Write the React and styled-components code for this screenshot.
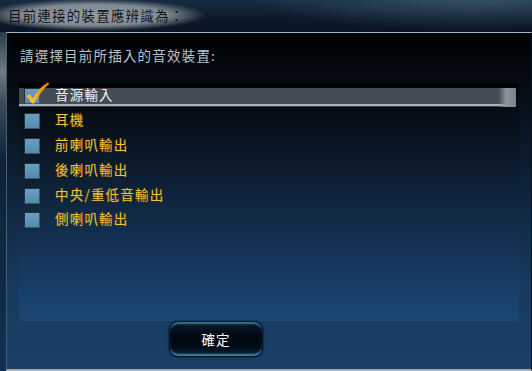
import React from "react";
import styled, { createGlobalStyle } from "styled-components";

const GlobalStyle = createGlobalStyle`
  html, body {
    margin: 0;
    padding: 0;
    background: #0b1626;
  }
  * {
    box-sizing: border-box;
  }
`;

const devices = [
  { id: "line-in", name: "音源輸入", checked: true },
  { id: "headphone", name: "耳機" },
  { id: "front", name: "前喇叭輸出" },
  { id: "rear", name: "後喇叭輸出" },
  { id: "center", name: "中央/重低音輸出" },
  { id: "side", name: "側喇叭輸出" },
];

const CheckMark = () => (
  <svg width="24" height="24" viewBox="0 0 24 24">
    <defs>
      <linearGradient id="chk" x1="0" y1="1" x2="1" y2="0">
        <stop offset="0" stopColor="#f7d23a" />
        <stop offset="0.5" stopColor="#f0a418" />
        <stop offset="1" stopColor="#d9780c" />
      </linearGradient>
    </defs>
    <path
      d="M0.5 14 L3.8 12 L6.8 16.5 Q12 6.5 22 0.3 L23.3 1.8 Q14.5 9.5 8.2 21.5 L6 21.5 Z"
      fill="url(#chk)"
    />
  </svg>
);

const App = () => {
  return (
    <>
      <GlobalStyle />
      <Window>
        <TitleBar>
          <TitleText>目前連接的裝置應辨識為：</TitleText>
        </TitleBar>
        <Body>
          <SideStrip />
          <Panel>
            <Prompt>請選擇目前所插入的音效裝置:</Prompt>
            <ListBox>
              {devices.map((d) => (
                <Row key={d.id} $selected={d.checked}>
                  <Box>
                    {d.checked && (
                      <Tick>
                        <CheckMark />
                      </Tick>
                    )}
                  </Box>
                  <Label $selected={d.checked}>{d.name}</Label>
                </Row>
              ))}
            </ListBox>
            <Footer>
              <OkButton>確定</OkButton>
            </Footer>
          </Panel>
        </Body>
      </Window>
    </>
  );
};

const Window = styled.div`
  width: 532px;
  height: 371px;
  display: flex;
  flex-direction: column;
  overflow: hidden;
  font-family: "Noto Sans CJK TC", "Noto Sans", sans-serif;
  background: #0b1626;
`;

const TitleBar = styled.div`
  height: 32px;
  flex: none;
  display: flex;
  align-items: center;
  background:
    radial-gradient(ellipse 220px 30px at 470px 0px, rgba(64, 94, 110, 0.7), rgba(64, 94, 110, 0) 100%),
    linear-gradient(to bottom, #172c42 0%, #0d1a2a 55%, #0a1424 100%);
`;

const TitleText = styled.div`
  height: 32px;
  display: flex;
  align-items: center;
  padding: 0 24px 3px 8px;
  font-size: 13.5px;
  letter-spacing: 1.2px;
  color: #111417;
  background: radial-gradient(
    ellipse 112px 16px at 94px 15px,
    #939ca3 0%,
    #7f8991 65%,
    rgba(110, 120, 130, 0) 100%
  );
`;

const Body = styled.div`
  flex: 1;
  display: flex;
  min-height: 0;
`;

const SideStrip = styled.div`
  width: 6px;
  flex: none;
  background: linear-gradient(
    to bottom,
    #2a3c4c 0px,
    #6f7c88 40px,
    #3a4c5c 70px,
    #0d2238 130px,
    #12304e 339px
  );
`;

const Panel = styled.div`
  flex: 1;
  display: flex;
  flex-direction: column;
  border-top: 1px solid #9ab4c8;
  border-left: 1px solid #4a5e70;
  border-right: 1px solid #07121e;
  border-bottom: 2px solid #a2adb6;
  background: linear-gradient(
    to bottom,
    #000204 0%,
    #050b12 15%,
    #0d2238 45%,
    #17395e 75%,
    #1a4068 100%
  );
`;

const Prompt = styled.div`
  height: 50px;
  padding: 12px 0 0 13px;
  font-size: 13.5px;
  letter-spacing: 1.2px;
  color: #bcc3ca;
`;

const ListBox = styled.div`
  width: 500px;
  height: 238px;
  margin-left: 12px;
  flex: none;
  border-top: 4px solid #000000;
  background: linear-gradient(
    to bottom,
    #03070c 0%,
    #08121d 20%,
    #112a46 55%,
    #1b4775 100%
  );
`;

const Row = styled.div`
  position: relative;
  height: 24.9px;
  display: flex;
  align-items: flex-start;
  padding: 0 0 0 5px;
  &::before {
    content: "";
    display: ${(p) => (p.$selected ? "block" : "none")};
    position: absolute;
    left: 0;
    right: 3px;
    top: 1px;
    height: 19px;
    background:
      linear-gradient(to right, rgba(160, 168, 176, 0) 96.5%, #8c949c 98%, #7a828a 100%),
      linear-gradient(to bottom, #434c55 0px, #434c55 16px, #aab2ba 16px, #aab2ba 18px, #3a4048 18px);
  }
`;

const Box = styled.div`
  position: relative;
  width: 16px;
  height: 16px;
  margin-top: 1px;
  flex: none;
  border: 1px solid #24313d;
  border-right-color: #3b5668;
  border-bottom-color: #3b5668;
  background: linear-gradient(to bottom, #6a9ec0, #558cae);
`;

const Tick = styled.div`
  position: absolute;
  left: 1px;
  top: -7px;
  line-height: 0;
`;

const Label = styled.span`
  position: relative;
  margin-left: 15px;
  margin-top: -1px;
  font-size: 13.5px;
  line-height: 16px;
  letter-spacing: 1.2px;
  color: ${(p) => (p.$selected ? "#f2f2f2" : "#f0c232")};
  text-shadow: ${(p) => (p.$selected ? "none" : "0 0 2px rgba(120, 90, 0, 0.6)")};
`;

const Footer = styled.div`
  padding-left: 162px;
`;

const OkButton = styled.button`
  width: 94px;
  height: 36px;
  border-radius: 9px;
  border: 1px solid #06121c;
  background: linear-gradient(to bottom, #061a2c 0%, #020a14 40%, #020a14 70%, #06223a 100%);
  box-shadow:
    inset 0 3px 2px -1px #2f7f96,
    inset 0 -3px 2px -1px #2c92b8,
    0 0 2px rgba(0, 0, 0, 0.8);
  color: #ffffff;
  font-family: "Noto Sans CJK TC", sans-serif;
  font-size: 13.5px;
  letter-spacing: 1px;
  cursor: pointer;
`;

export default App;
